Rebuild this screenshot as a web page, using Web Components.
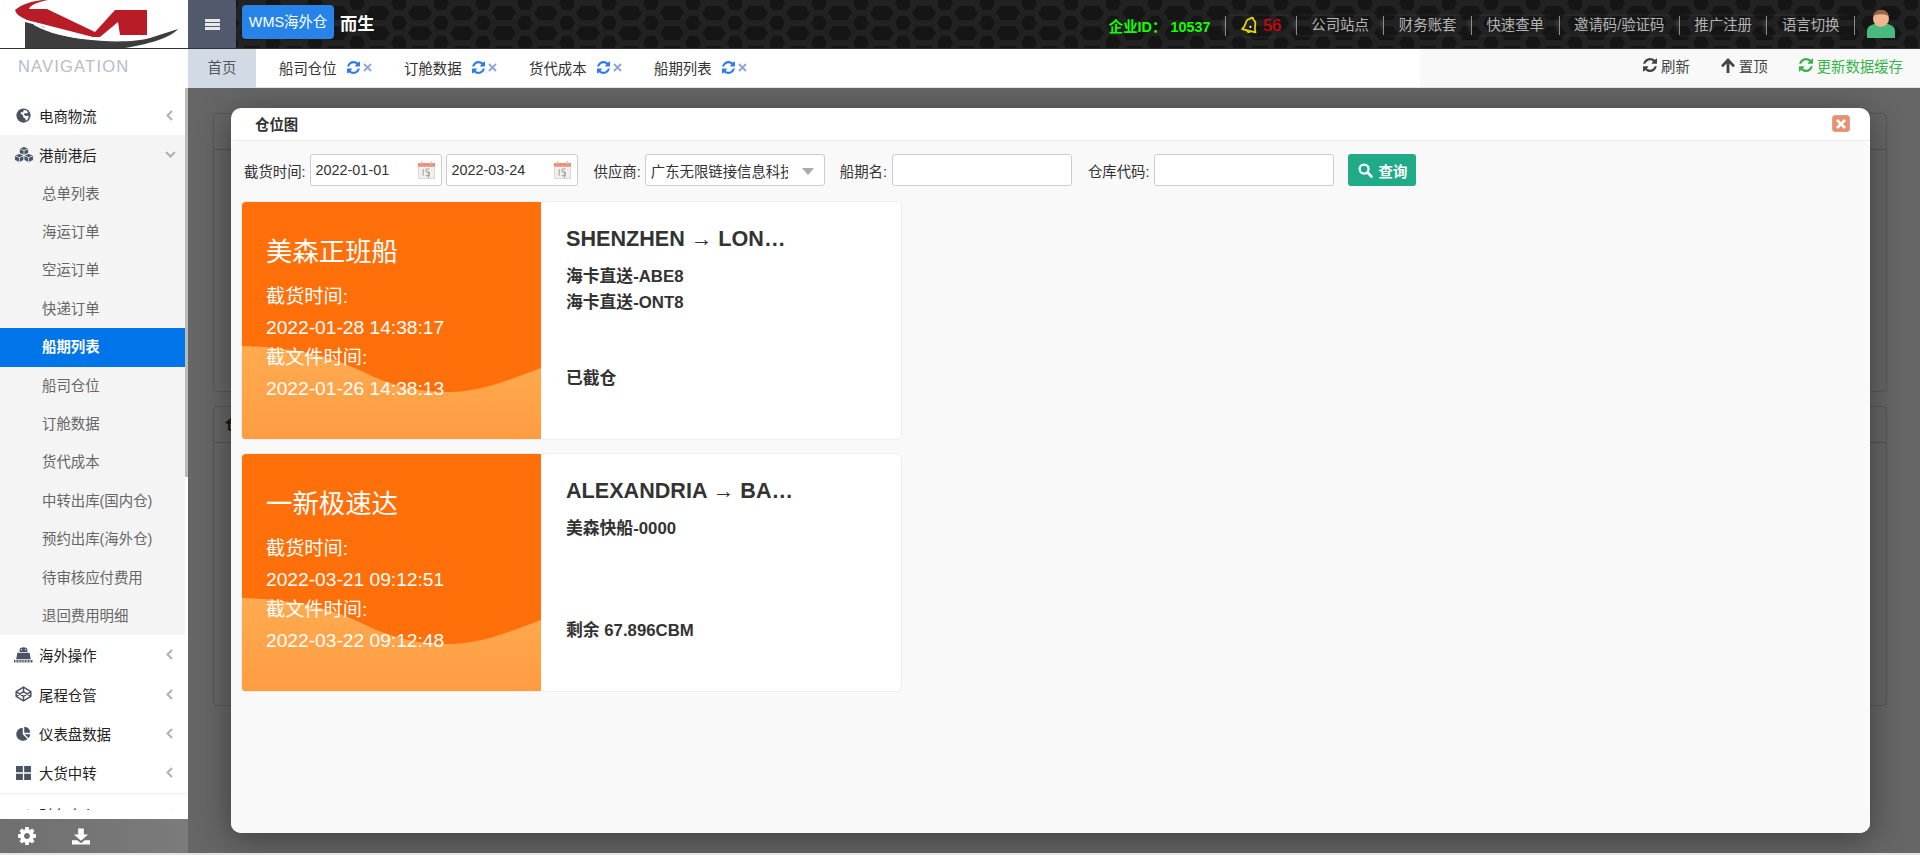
<!DOCTYPE html>
<html lang="zh">
<head>
<meta charset="utf-8">
<title>WMS</title>
<style>
    html, body { margin: 0; height: 100%; overflow: hidden; background: #e6e4e4; }
    body { font: 14.4px "Liberation Sans", "Noto Sans CJK SC", sans-serif; color: #333; }
</style>
</head>
<body>
<wms-app>
    <wms-header slot="header"></wms-header>
    <wms-sidebar slot="side">
        <nav-item icon="globe" arrow="left">电商物流</nav-item>
        <nav-item icon="cubes" arrow="down" open>港前港后</nav-item>
        <nav-sub>总单列表</nav-sub>
        <nav-sub>海运订单</nav-sub>
        <nav-sub>空运订单</nav-sub>
        <nav-sub>快递订单</nav-sub>
        <nav-sub active>船期列表</nav-sub>
        <nav-sub>船司仓位</nav-sub>
        <nav-sub>订舱数据</nav-sub>
        <nav-sub>货代成本</nav-sub>
        <nav-sub>中转出库(国内仓)</nav-sub>
        <nav-sub>预约出库(海外仓)</nav-sub>
        <nav-sub>待审核应付费用</nav-sub>
        <nav-sub>退回费用明细</nav-sub>
        <nav-item icon="ship" arrow="left">海外操作</nav-item>
        <nav-item icon="codepen" arrow="left">尾程仓管</nav-item>
        <nav-item icon="pie" arrow="left">仪表盘数据</nav-item>
        <nav-item icon="grid" arrow="left" line>大货中转</nav-item>
        <nav-item icon="plane" arrow="left">财务中心</nav-item>
    </wms-sidebar>
    <wms-tabs slot="tabs">
        <tab-item>船司仓位</tab-item>
        <tab-item>订舱数据</tab-item>
        <tab-item>货代成本</tab-item>
        <tab-item>船期列表</tab-item>
    </wms-tabs>
    <wms-stage slot="main">
        <cargo-modal heading="仓位图">
            <filter-bar slot="filters"></filter-bar>
            <voyage-card carrier="美森正班船" cut="2022-01-28 14:38:17" doc="2022-01-26 14:38:13"
                route="SHENZHEN → LONDON" lines="海卡直送-ABE8|海卡直送-ONT8" status="已截仓"></voyage-card>
            <voyage-card carrier="一新极速达" cut="2022-03-21 09:12:51" doc="2022-03-22 09:12:48"
                route="ALEXANDRIA → BALTIMORE" lines="美森快船-0000" status="剩余 67.896CBM"></voyage-card>
        </cargo-modal>
    </wms-stage>
</wms-app>

<script>
const ICONS = {
    refresh: ['0 0 1536 1536', '<path fill="currentColor" d="M1511 928q0 5-1 7-64 268-268 434.5t-478 166.5q-146 0-282.5-55t-243.5-157l-129 129q-19 19-45 19t-45-19-19-45v-448q0-26 19-45t45-19h448q26 0 45 19t19 45-19 45l-137 137q71 66 161 102t187 36q134 0 250-65t186-179q11-17 53-117 8-23 30-23h192q13 0 22.5 9.5t9.5 22.5zm25-800v448q0 26-19 45t-45 19h-448q-26 0-45-19t-19-45 19-45l138-138q-148-137-349-137-134 0-250 65t-186 179q-11 17-53 117-8 23-30 23h-199q-13 0-22.5-9.5t-9.5-22.5v-7q65-268 270-434.5t480-166.5q146 0 284 55.5t245 156.5l130-129q19-19 45-19t45 19 19 45z"/>'],
    cog: ['0 0 1536 1536', '<path fill="currentColor" d="M1024 768q0-106-75-181t-181-75-181 75-75 181 75 181 181 75 181-75 75-181zm512-109v222q0 12-8 23t-20 13l-185 28q-19 54-39 91 35 50 107 138 10 12 10 25t-9 23q-27 37-99 108t-94 71q-12 0-26-9l-138-108q-44 23-91 38-16 136-29 186-7 28-36 28h-222q-14 0-24.5-8.5t-11.5-21.5l-28-184q-49-16-90-37l-141 107q-10 9-25 9-14 0-25-11-126-114-165-168-7-10-7-23 0-12 8-23 15-21 51-66.5t54-70.5q-27-50-41-99l-183-27q-13-2-21-12.5t-8-23.5v-222q0-12 8-23t19-13l186-28q14-46 39-92-40-57-107-138-10-12-10-24 0-10 9-23 26-36 98.5-107.5t94.5-71.5q13 0 26 10l138 107q44-23 91-38 16-136 29-186 7-28 36-28h222q14 0 24.5 8.5t11.5 21.5l28 184q49 16 90 37l142-107q9-9 24-9 13 0 25 10 129 119 165 170 7 8 7 22 0 12-8 23-15 21-51 66.5t-54 70.5q26 50 41 98l183 28q13 2 21 12.5t8 23.5z"/>'],
    globe: ['0 0 20 20', '<circle cx="10" cy="10" r="9.500" fill="currentColor"/><path fill="#fff" d="M11 2.500l3 .8 2 2.400-1.500 1.600-2.600-.6-1.400 2 2.400 1.800 2.600-.3 1.800 1.600-2 3.600-2.200 2-.6-3.400-2.800-1.800-.5-2.800-3-1.600.4-2 2.800-.2.500-2.200z"/>'],
    cubes: ['0 0 24 20', '<g fill="currentColor" stroke="#fff" stroke-width=".9" stroke-linejoin="round"><path d="M12 .5l5.500 2.400v5.600L12 11 6.500 8.500V2.900z"/><path d="M6.500 8.800l5.500 2.400v5.600L6.500 19.500 .7 16.800v-5.600z"/><path d="M17.500 8.800l5.800 2.400v5.600l-5.800 2.700-5.500-2.700v-5.600z"/></g><g fill="none" stroke="#fff" stroke-width=".9"><path d="M6.500 2.900L12 5.300l5.500-2.400M12 5.300V11M.7 11.200l5.800 2.500 5.500-2.500M6.500 13.700v5.800M12 11.200l5.500 2.500 5.800-2.500M17.500 13.700v5.800"/></g>'],
    ship: ['0 0 22 18', '<path fill="currentColor" d="M6.500 3C6.500 1 8.500 0 11 0s4.500 1 4.500 3v2.500h-9z"/><path fill="currentColor" d="M4 6.500h14l1.500 7.500h-17z"/><path fill="#fff" d="M8 2.200h1.400v1.400H8zM12.600 2.200H14v1.400h-1.400z"/><path stroke="currentColor" stroke-width="3" stroke-dasharray="1.200 .6" d="M0 16.300h22"/>'],
    codepen: ['0 0 22 20', '<g fill="none" stroke="currentColor" stroke-width="1.900" stroke-linejoin="round"><path d="M11 1l9.500 6v6L11 19 1.500 13V7z"/><path d="M1.500 7l9.500 6 9.500-6M1.500 13L11 7l9.500 6M11 1v6M11 13v6"/></g>'],
    pie: ['0 0 20 20', '<path fill="currentColor" d="M9 2.200V11l6.300 6.300A8.800 8.800 0 1 1 9 2.200z"/><path fill="currentColor" d="M11 1a8.800 8.800 0 0 1 8 8h-8z"/><path fill="currentColor" d="M11.500 11H19a8.800 8.800 0 0 1-2.300 5.200z"/>'],
    grid: ['0 0 16 15', '<path fill="currentColor" d="M0 0h7.300v6.800H0zM8.700 0H16v6.800H8.700zM0 8.200h7.300V15H0zM8.700 8.200H16V15H8.700z"/>'],
    plane: ['0 0 20 20', '<path fill="currentColor" d="M18 2L8 9 3 7.500 1.500 9l5 3 3 5 1.500-1.500L9.500 11z"/>'],
    download: ['0 0 19 17', '<path fill="currentColor" d="M6.500 0h6v6.500H17L9.500 13 2 6.500h4.500z"/><path fill="currentColor" d="M0 12.500h5.500l4 3 4-3H19V17H0z"/>'],
    up: ['0 0 14 15', '<path fill="currentColor" d="M7 0l7 7.400-1.900 1.800-3.700-3.800V15H5.600V5.400L1.900 9.200 0 7.400z"/>'],
    search: ['0 0 16 16', '<circle cx="6.500" cy="6.500" r="4.800" fill="none" stroke="currentColor" stroke-width="2.400"/><path stroke="currentColor" stroke-width="3" stroke-linecap="round" d="M10.500 10.500l3.800 3.800"/>'],
    bell: ['0 0 22 24', '<g transform="rotate(14 11 12)"><path fill="none" stroke="#e6dc00" stroke-width="2.100" stroke-linejoin="round" d="M11 1.500c1.300 0 2 1 2 2 2.800 1 4 3.200 4 6.500 0 4 1.200 6 2.500 8h-17c1.300-2 2.500-4 2.500-8 0-3.300 1.200-5.500 4-6.500 0-1 .7-2 2-2z"/><path fill="none" stroke="#e6dc00" stroke-width="2" d="M9 18.500a2.200 2.200 0 0 0 4 0"/></g><circle cx="11.500" cy="13" r="1.300" fill="#fff"/>'],
    avatar: ['0 0 28 28', '<path fill="#48b97f" d="M0 28v-7c0-5 5-7.500 14-7.500S28 16 28 21v7z"/><ellipse cx="14" cy="8.500" rx="8" ry="8.500" fill="#efb68e"/><path fill="#95664a" d="M6.500 6C7 2 10 0 14 0s7 2 7.500 6C18 3.500 10 3.500 6.500 6z"/>'],
    cal: ['0 0 18 19', '<path fill="#f1f0ec" stroke="#d8d6d0" d="M.5 2.500h17v16H.5z"/><path fill="#ee8f7a" d="M0 2h18v4H0z"/><path fill="#c9c9c9" d="M3 0h1.500v3.500H3zM13.500 0H15v3.500h-1.500z"/><path fill="none" stroke="#9a9a9a" d="M5.500 8.500v7M8.500 8.500h3.500M8.500 8.500v3h3.500v4H8M11 12v6"/>']
};

class AppIcon extends HTMLElement {
    connectedCallback() {
        const def = ICONS[this.getAttribute('name')];
        const w = this.getAttribute('w') || 14;
        const h = this.getAttribute('h') || w;
        const root = this.shadowRoot || this.attachShadow({ mode: 'open' });
        root.innerHTML = `<style>:host{display:inline-flex}svg{display:block}</style>
            <svg width="${w}" height="${h}" viewBox="${def[0]}">${def[1]}</svg>`;
    }
}

const appTemplate = document.createElement('template');
appTemplate.innerHTML = `
    <style>
        :host{
            display: grid;
            grid-template-columns: 188px 1fr;
            grid-template-rows: 49px 39px 1fr;
            height: 853px;
            overflow: hidden;
        }
        .head{ grid-column: 1 / 3; grid-row: 1; }
        .side{ grid-column: 1; grid-row: 2 / 4; min-height: 0; position: relative; z-index: 2; }
        .tabs{ grid-column: 2; grid-row: 2; }
        .main{ grid-column: 2; grid-row: 3; min-height: 0; }
    </style>
    <div class="head"><slot name="header"></slot></div>
    <div class="side"><slot name="side"></slot></div>
    <div class="tabs"><slot name="tabs"></slot></div>
    <div class="main"><slot name="main"></slot></div>
`;
class WmsApp extends HTMLElement {
    constructor() {
        super();
        this.attachShadow({ mode: 'open' }).appendChild(appTemplate.content.cloneNode(true));
    }
}

const headerTemplate = document.createElement('template');
headerTemplate.innerHTML = `
    <style>
        :host{
            display: flex;
            height: 49px;
            box-sizing: border-box;
            border-bottom: 1px solid #333;
            position: relative;
            background: #191919;
        }
        .hex{ position: absolute; left: 0; top: 0; width: 100%; height: 48px; }
        .logo{ width: 188px; height: 48px; background: #fff; position: relative; flex: none; overflow: hidden; }
        .logo svg{ display: block; }
        .toggle{
            width: 48px; flex: none; position: relative;
            background: #505a6c;
            display: flex; align-items: center; justify-content: center;
        }
        .toggle i{ display: block; width: 15px; height: 11px;
            background: repeating-linear-gradient(#e8e8e8 0 3px, transparent 3px 4px); }
        .wms{
            position: relative; flex: none;
            margin: 5px 0 0 6px; width: 92px; height: 34px; line-height: 34px;
            text-align: center; color: #fff; background: #2684e8; border-radius: 4px;
        }
        .name{
            position: relative; flex: none;
            margin: 6px 0 0 6px; line-height: 36px;
            color: #fff; font-weight: bold; font-size: 17.280px;
        }
        .right{
            position: relative; margin-left: auto; display: flex; align-items: center;
            height: 48px; padding: 3px 25px 0 0; box-sizing: border-box;
        }
        .ent{ color: #14ff00; font-weight: bold; padding-right: 15px; }
        .cell{ color: #b4b4b4; padding: 0 14.500px; border-left: 1px solid #8c8c8c; line-height: 19px;
            box-shadow: -3px 0 7px -4px rgba(255,255,255,.4); }
        .bell{ display: flex; align-items: center; gap: 4px; color: #e80000; font-size: 16.500px; }
        .av{ margin-left: 12px; margin-top: -3px; display: flex; }
        .last{ padding: 0; height: 19px; }
    </style>
    <svg class="hex" aria-hidden="true">
        <defs>
            <pattern id="hx" width="42" height="20" patternUnits="userSpaceOnUse">
                <rect width="42" height="20" fill="#222"/>
                <path fill="#151515" d="M-12 13l5-7H7l5 7-5 7H-7zM30 13l5-7h14l5 7-5 7H35z"/>
                <path fill="#151515" d="M13 3l4-7h8l4 7-4 7h-8zM13 23l4-7h8l4 7-4 7h-8z"/>
            </pattern>
        </defs>
        <rect width="100%" height="48" fill="url(#hx)"/>
    </svg>
    <div class="logo">
        <svg width="188" height="48" viewBox="0 0 188 48">
            <defs><filter id="bl"><feGaussianBlur stdDeviation=".5"/></filter></defs>
            <g filter="url(#bl)">
                <path fill="#3c3c3e" d="M25 22L44 27L50 32C80 42 130 44 150 38L178 29C170 38 150 44 120 49H25Z"/>
                <path fill="none" stroke="#fff" stroke-width="2" d="M34 24C60 38 120 48 176 27"/>
                <path fill="#b81f28" d="M15 10C22 4 32 1 43 0H48C38 2 30 5 29 9H47L95 32L115 10H147V35H120L118 22L100 37H93L27 20C20 17 16 14 15 10Z"/>
            </g>
        </svg>
    </div>
    <div class="toggle"><i></i></div>
    <div class="wms">WMS海外仓</div>
    <div class="name">而生</div>
    <div class="right">
        <span class="ent">企业ID： 10537</span>
        <span class="cell bell"><app-icon name="bell" w="18" h="20"></app-icon>56</span>
        <span class="cell">公司站点</span>
        <span class="cell">财务账套</span>
        <span class="cell">快速查单</span>
        <span class="cell">邀请码/验证码</span>
        <span class="cell">推广注册</span>
        <span class="cell">语言切换</span>
        <span class="cell last"></span>
        <span class="av"><app-icon name="avatar" w="28" h="28"></app-icon></span>
    </div>
`;
class WmsHeader extends HTMLElement {
    constructor() {
        super();
        this.attachShadow({ mode: 'open' }).appendChild(headerTemplate.content.cloneNode(true));
    }
}

const sideTemplate = document.createElement('template');
sideTemplate.innerHTML = `
    <style>
        :host{
            display: flex; flex-direction: column;
            height: 804px; width: 188px;
            background: #fff;
            position: relative;
        }
        .title{
            flex: none; height: 46.500px; box-sizing: border-box; padding: 8px 0 0 18px;
            font-size: 16.500px; letter-spacing: 1.200px; color: #b4bcc8;
        }
        .list{ flex: none; height: 714.500px; overflow: hidden; }
        .bar{ position: absolute; right: 0; top: 39px; width: 3px; height: 389px; background: #b9b9b9; }
        .foot{
            flex: none; height: 34px; margin-top: auto; background: linear-gradient(90deg, #6f6f6f, #7b7b7b);
            display: flex; align-items: center; color: #fff; padding-left: 18px; gap: 36px;
        }
    </style>
    <div class="title">NAVIGATION</div>
    <div class="list"><slot></slot></div>
    <div class="bar"></div>
    <div class="foot">
        <app-icon name="cog" w="18"></app-icon>
        <app-icon name="download" w="18" h="17"></app-icon>
    </div>
`;
class WmsSidebar extends HTMLElement {
    constructor() {
        super();
        this.attachShadow({ mode: 'open' }).appendChild(sideTemplate.content.cloneNode(true));
    }
}

const ICON_SIZE = {
    globe: [15, 15], cubes: [20, 17], ship: [19, 16], codepen: [17, 16], pie: [15, 15], grid: [15, 14], plane: [15, 15]
};
class NavItem extends HTMLElement {
    constructor() {
        super();
        this.attachShadow({ mode: 'open' });
    }

    connectedCallback() {
        const icon = this.getAttribute('icon');
        const size = ICON_SIZE[icon];
        const chevron = this.getAttribute('arrow') === 'down'
            ? '<path d="M1 3l4.500 4.500L10 3"/>'
            : '<path d="M7 1L2.500 5.500 7 10"/>';
        this.shadowRoot.innerHTML = `
            <style>
                :host{
                    display: flex; align-items: center; height: 39.200px;
                    box-sizing: border-box; position: relative;
                    background: #fff;
                    color: #222;
                }
                :host([open]){ background: #f4f4f4; height: 40px; padding-bottom: .8px; }
                :host([line]){ margin-bottom: 2.700px; }
                :host([line])::after{ content: ''; position: absolute; left: 0; right: 0; bottom: -2px; height: 1px; background: #eee; }
                .ic{ width: 39px; flex: none; display: flex; justify-content: center; color: #4a5362; padding-left: 8px; box-sizing: border-box; }
                .ar{ position: absolute; left: 165px; top: 14px; }
                svg.c{ display: block; fill: none; stroke: #b0b0b0; stroke-width: 2; }
            </style>
            <span class="ic"><app-icon name="${icon}" w="${size[0]}" h="${size[1]}"></app-icon></span>
            <slot></slot>
            <span class="ar"><svg class="c" width="11" height="11" viewBox="0 0 11 11">${chevron}</svg></span>
        `;
    }
}

class NavSub extends HTMLElement {
    constructor() {
        super();
        this.attachShadow({ mode: 'open' }).innerHTML = `
            <style>
                :host{
                    display: block; height: 38.400px; line-height: 38.400px;
                    padding-left: 42px; width: 185px; box-sizing: border-box;
                    background: #f4f4f4; color: #666; white-space: nowrap;
                }
                :host([active]){ background: #0074e9; color: #fff; font-weight: bold; }
            </style>
            <slot></slot>
        `;
    }
}

const tabsTemplate = document.createElement('template');
tabsTemplate.innerHTML = `
    <style>
        :host{
            display: flex; height: 39px; box-sizing: border-box;
            background: #fff; border-bottom: 1px solid #e4e4e4;
        }
        .home{ width: 68px; flex: none; background: #d2dae5; color: #555; text-align: center; line-height: 39px; margin-bottom: -1px; }
        .tools{
            margin-left: auto; width: 500px; box-sizing: border-box; background: #f9f9f9;
            display: flex; align-items: center; justify-content: flex-end;
            padding: 0 17px 6px 0; color: #444;
        }
        .tools span{ display: flex; align-items: center; gap: 4px; margin-left: 31px; }
        .tools .g{ color: #35b549; }
    </style>
    <div class="home">首页</div>
    <slot></slot>
    <div class="tools">
        <span><app-icon name="refresh" w="14"></app-icon>刷新</span>
        <span><app-icon name="up" w="14" h="15"></app-icon>置顶</span>
        <span class="g"><app-icon name="refresh" w="14"></app-icon>更新数据缓存</span>
    </div>
`;
class WmsTabs extends HTMLElement {
    constructor() {
        super();
        this.attachShadow({ mode: 'open' }).appendChild(tabsTemplate.content.cloneNode(true));
    }
}

class TabItem extends HTMLElement {
    constructor() {
        super();
        this.attachShadow({ mode: 'open' }).innerHTML = `
            <style>
                :host{
                    display: flex; align-items: center; width: 125px; box-sizing: border-box;
                    padding: 0 0 2px 23px; color: #333; flex: none;
                }
                .r{ color: #2f7bea; margin-left: 10px; display: flex; }
                svg{ display: block; margin-left: 3px; }
            </style>
            <slot></slot>
            <span class="r"><app-icon name="refresh" w="13"></app-icon></span>
            <svg width="9" height="9" viewBox="0 0 9 9"><path stroke="#8ea6d6" stroke-width="1.800" d="M1 1l7 7M8 1L1 8"/></svg>
        `;
    }
}

const stageTemplate = document.createElement('template');
stageTemplate.innerHTML = `
    <style>
        :host{
            display: block; height: 765px; position: relative; overflow: hidden;
            background: #fff;
        }
        .back{ padding: 25px 33px 0 25px; display: flex; flex-direction: column; gap: 14px; }
        .panel{ border: 1px solid #d9d9d9; border-radius: 4px; background: #fff; }
        .panel b{ display: block; height: 35px; line-height: 35px; padding-left: 11px; border-bottom: 1px solid #ccc; font-size: 14.400px; }
        .mask{ position: absolute; inset: 0; background: rgba(0,0,0,.6); }
    </style>
    <div class="back">
        <div class="panel" style="height:277px"><b></b></div>
        <div class="panel" style="height:298px"><b>仓位</b></div>
    </div>
    <div class="mask"></div>
    <slot></slot>
`;
class WmsStage extends HTMLElement {
    constructor() {
        super();
        this.attachShadow({ mode: 'open' }).appendChild(stageTemplate.content.cloneNode(true));
    }
}

const modalTemplate = document.createElement('template');
modalTemplate.innerHTML = `
    <style>
        :host{
            position: absolute; left: 43px; top: 20px; width: 1639px; height: 725px;
            display: flex; flex-direction: column;
            background: #fff; border-radius: 10px;
            box-shadow: 0 6px 34px rgba(0,0,0,.4);
            overflow: hidden;
        }
        .head{
            flex: none; height: 33px; box-sizing: border-box; padding: 0 0 1px 24px;
            display: flex; align-items: center; font-weight: bold; border-bottom: 1px solid #ececec;
        }
        .x{
            margin-left: auto; margin-right: 20px; width: 18px; height: 17px; box-sizing: border-box;
            background: #e8916f; border: 1px solid #d8a48e; border-radius: 3px;
            display: flex; align-items: center; justify-content: center;
        }
        .x svg{ display: block; }
        .body{
            flex: 1; min-height: 0; background: #f9f9f9; border-radius: 8px 8px 0 0;
            display: flex; flex-direction: column;
            padding: 13px 0 0 10px;
        }
        .cards{ display: flex; flex-direction: column; gap: 13px; margin-top: 15px; }
    </style>
    <div class="head">
        <span class="t"></span>
        <span class="x"><svg width="10" height="10" viewBox="0 0 10 10"><path stroke="#fff" stroke-width="2.600" d="M1 1l8 8M9 1L1 9"/></svg></span>
    </div>
    <div class="body">
        <slot name="filters"></slot>
        <div class="cards"><slot></slot></div>
    </div>
`;
class CargoModal extends HTMLElement {
    constructor() {
        super();
        this.attachShadow({ mode: 'open' }).appendChild(modalTemplate.content.cloneNode(true));
        this.$title = this.shadowRoot.querySelector('.t');
    }

    static get observedAttributes() {
        return ['heading'];
    }

    attributeChangedCallback(name, oldValue, newValue) {
        this.$title.textContent = newValue;
    }
}

const filterTemplate = document.createElement('template');
filterTemplate.innerHTML = `
    <style>
        :host{ display: flex; align-items: center; height: 32px; padding-left: 3px; }
        label{ margin-right: 4px; white-space: nowrap; color: #333; }
        .box, input{
            height: 32px; box-sizing: border-box; border: 1px solid #ccc; border-radius: 3px;
            background: #fff; font: inherit; color: #333; padding: 0 5px; margin: 0;
            display: flex; align-items: center; position: relative; flex: none;
        }
        .date{ width: 132px; margin-right: 4px; }
        .date app-icon{ position: absolute; right: 6px; top: 6px; }
        .sel{ width: 180px; margin-right: 15px; }
        .sel span{ width: 137px; overflow: hidden; white-space: nowrap; }
        .sel i{ position: absolute; right: 10px; top: 13px; border: 6px solid transparent; border-top: 7px solid #aaa; border-bottom: 0; }
        input{ width: 180px; margin-right: 16px; }
        .gap{ margin-left: 12px; }
        .wide{ margin-right: 5px; }
        button{
            height: 32px; width: 68px; border: 0; border-radius: 3px; background: #1fab87; color: #fff;
            font: bold 14.400px "Liberation Sans", "Noto Sans CJK SC", sans-serif;
            display: flex; align-items: center; justify-content: center; gap: 6px; padding: 0; margin-left: -2px;
        }
    </style>
    <label>截货时间:</label>
    <div class="box date">2022-01-01<app-icon name="cal" w="17" h="18"></app-icon></div>
    <div class="box date">2022-03-24<app-icon name="cal" w="17" h="18"></app-icon></div>
    <label class="gap">供应商:</label>
    <div class="box sel"><span>广东无限链接信息科技</span><i></i></div>
    <label class="wide">船期名:</label>
    <input type="text">
    <label class="wide">仓库代码:</label>
    <input type="text">
    <button><app-icon name="search" w="15"></app-icon>查询</button>
`;
class FilterBar extends HTMLElement {
    constructor() {
        super();
        this.attachShadow({ mode: 'open' }).appendChild(filterTemplate.content.cloneNode(true));
    }
}

const cardTemplate = document.createElement('template');
cardTemplate.innerHTML = `
    <style>
        :host{
            display: flex; width: 661px; height: 239px; box-sizing: border-box;
            background: #fff; border: 1px solid #eeeef2; border-radius: 5px; overflow: hidden;
        }
        .left{
            width: 299px; flex: none; position: relative; background: #ff6f0a; color: #fff;
            padding: 34px 0 0 24px; box-sizing: border-box;
        }
        .wave{ position: absolute; left: 0; top: 0; }
        .left > div{ position: relative; }
        .carrier{ font-size: 26.400px; line-height: 32px; margin-bottom: 14px; }
        .time{ font-size: 19.200px; line-height: 30.720px; white-space: nowrap; }
        .right{
            flex: 1; padding: 24px 24px 47px 25px; display: flex; flex-direction: column;
            font-weight: bold; color: #333; min-width: 0;
        }
        .route{
            font-size: 21.600px; line-height: 26px; width: 232px;
            overflow: hidden; white-space: nowrap; text-overflow: ellipsis; margin-bottom: 12px;
        }
        .route span{ font-weight: normal; }
        .line, .status{ font-size: 16.800px; line-height: 26px; }
        .status{ margin-top: auto; }
    </style>
    <div class="left">
        <svg class="wave" width="299" height="238" viewBox="0 0 300 238" preserveAspectRatio="none">
            <defs><linearGradient id="wv" x1="0" y1="0" x2="0" y2="1"><stop offset="0" stop-color="#ffab50"/><stop offset="1" stop-color="#ff9c42"/></linearGradient></defs>
            <path fill="url(#wv)" d="M0 144C60 146 90 155 122 170C150 184 180 191 211 190C245 188 270 177 300 166V238H0Z"/>
        </svg>
        <div class="carrier"></div>
        <div class="time">截货时间:</div>
        <div class="time cut"></div>
        <div class="time">截文件时间:</div>
        <div class="time doc"></div>
    </div>
    <div class="right">
        <div class="route"></div>
        <div class="lines"></div>
        <div class="status"></div>
    </div>
`;
class VoyageCard extends HTMLElement {
    constructor() {
        super();
        this.attachShadow({ mode: 'open' }).appendChild(cardTemplate.content.cloneNode(true));
    }

    static get observedAttributes() {
        return ['carrier', 'cut', 'doc', 'route', 'lines', 'status'];
    }

    attributeChangedCallback(name, oldValue, newValue) {
        const root = this.shadowRoot;
        switch (name) {
            case 'lines':
                root.querySelector('.lines').innerHTML = newValue.split('|').map((l) => `<div class="line">${l}</div>`).join('');
                break;
            case 'route':
                // the arrow is not bold in the real page, it comes from a fallback font
                root.querySelector('.route').innerHTML = newValue.replace('→', '<span>→</span>');
                break;
            case 'carrier': root.querySelector('.carrier').textContent = newValue; break;
            case 'cut': root.querySelector('.cut').textContent = newValue; break;
            case 'doc': root.querySelector('.doc').textContent = newValue; break;
            case 'status': root.querySelector('.status').textContent = newValue; break;
        }
    }
}

customElements.define('app-icon', AppIcon);
customElements.define('wms-app', WmsApp);
customElements.define('wms-header', WmsHeader);
customElements.define('wms-sidebar', WmsSidebar);
customElements.define('nav-item', NavItem);
customElements.define('nav-sub', NavSub);
customElements.define('wms-tabs', WmsTabs);
customElements.define('tab-item', TabItem);
customElements.define('wms-stage', WmsStage);
customElements.define('cargo-modal', CargoModal);
customElements.define('filter-bar', FilterBar);
customElements.define('voyage-card', VoyageCard);
</script>
</body>
</html>
